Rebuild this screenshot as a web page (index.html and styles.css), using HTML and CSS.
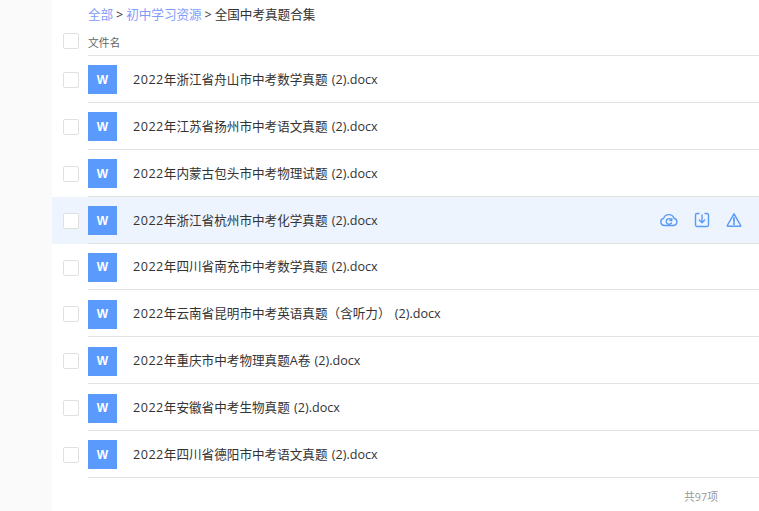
FILE: index.html
```html
<!DOCTYPE html>
<html lang="zh-CN">
<head>
<meta charset="utf-8">
<title>全国中考真题合集</title>
<link rel="stylesheet" href="styles.css">
</head>
<body>
<main class="panel">
  <nav class="crumbs"><a>全部</a> &gt; <a>初中学习资源</a> &gt; 全国中考真题合集</nav>
  <div class="head">
    <span class="check"></span>
    <div class="cell head-cell">文件名</div>
  </div>
  <div class="row"><span class="check"></span><div class="cell"><span class="file">W</span><span class="name"><span class="yr">2022</span>年浙江省舟山市中考数学真题 (2).docx</span></div></div>
  <div class="row"><span class="check"></span><div class="cell"><span class="file">W</span><span class="name"><span class="yr">2022</span>年江苏省扬州市中考语文真题 (2).docx</span></div></div>
  <div class="row"><span class="check"></span><div class="cell"><span class="file">W</span><span class="name"><span class="yr">2022</span>年内蒙古包头市中考物理试题 (2).docx</span></div></div>
  <div class="row hover"><span class="check"></span><div class="cell"><span class="file">W</span><span class="name"><span class="yr">2022</span>年浙江省杭州市中考化学真题 (2).docx</span>
    <div class="actions">
      <svg width="18" height="18" viewBox="0 0 18 18" fill="none" stroke="#5b9bf8" stroke-width="1.4" stroke-linejoin="round" stroke-linecap="round"><path d="M5 14.500H4.600A3.600 3.600 0 0 1 3.600 7.400 5.500 5.500 0 0 1 14 7.200a3.700 3.700 0 0 1-.5 7.300H5z"/><path d="M11.600 9.200A2.800 2.800 0 1 0 11.400 12M9.800 9.600h2V7.600"/></svg>
      <svg width="18" height="18" viewBox="0 0 18 18" fill="none" stroke="#5b9bf8" stroke-width="1.4" stroke-linejoin="round" stroke-linecap="round"><path d="M6 2.500H4a1.500 1.500 0 0 0-1.500 1.500v10A1.500 1.500 0 0 0 4 15.500h10a1.500 1.500 0 0 0 1.500-1.500V4A1.500 1.500 0 0 0 14 2.500h-2"/><path d="M9 4v7.500M6.300 9 9 11.700 11.700 9"/></svg>
      <svg width="18" height="18" viewBox="0 0 18 18" fill="none" stroke="#5b9bf8" stroke-width="1.500" stroke-linejoin="round" stroke-linecap="round"><path d="M9 2.800 15.700 14.500a.5.5 0 0 1-.4.700H2.700a.5.5 0 0 1-.4-.700z"/><path d="M9 7v3.800" stroke-width="1.800"/><path d="M9 12.500v.7" stroke-width="1.800"/></svg>
    </div></div></div>
  <div class="row"><span class="check"></span><div class="cell"><span class="file">W</span><span class="name"><span class="yr">2022</span>年四川省南充市中考数学真题 (2).docx</span></div></div>
  <div class="row"><span class="check"></span><div class="cell"><span class="file">W</span><span class="name"><span class="yr">2022</span>年云南省昆明市中考英语真题（含听力） (2).docx</span></div></div>
  <div class="row"><span class="check"></span><div class="cell"><span class="file">W</span><span class="name"><span class="yr">2022</span>年重庆市中考物理真题A卷 (2).docx</span></div></div>
  <div class="row"><span class="check"></span><div class="cell"><span class="file">W</span><span class="name"><span class="yr">2022</span>年安徽省中考生物真题 (2).docx</span></div></div>
  <div class="row"><span class="check"></span><div class="cell"><span class="file">W</span><span class="name"><span class="yr">2022</span>年四川省德阳市中考语文真题 (2).docx</span></div></div>
  <div class="total">共97项</div>
</main>
</body>
</html>
```
FILE: styles.css
```css
html, body { margin: 0; height: 100%; }
body {
  background: #fafafa;
  font-family: "Open Sans", "Noto Sans CJK SC", sans-serif;
  color: #333;
  overflow: hidden;
}
.panel {
  margin-left: 52px;
  height: 511px;
  background: #fff;
}
.crumbs {
  padding: 6px 0 0 36px;
  height: 20px;
  font-size: 12.6px;
  line-height: 17px;
  word-spacing: -0.4px;
}
.crumbs a { color: #7f9cfb; }
.head, .row { display: flex; align-items: stretch; }
.head { height: 30px; }
.check {
  flex: none;
  box-sizing: border-box;
  width: 16px;
  height: 16px;
  margin: 7px 9px 0 11px;
  border: 1px solid #e0e0e0;
  border-radius: 2px;
  background: #fff;
}
.cell {
  flex: 1;
  display: flex;
  align-items: center;
  border-bottom: 1px solid #e2e2e2;
}
.head-cell {
  font-size: 10.8px;
  color: #666;
  padding-top: 2px;
}
.row { height: 46.88px; }
.row .check { margin-top: 16px; }
.row .cell { box-sizing: border-box; }
.hover { background: #edf4fe; }
.file {
  flex: none;
  display: flex;
  align-items: center;
  justify-content: center;
  width: 29px;
  height: 29px;
  margin: 2px 16px 0 0;
  background: #5a9afd;
  color: #fff;
  font: bold 12px "Liberation Sans", sans-serif;
}
.name {
  font-size: 12.6px;
  color: #333;
  white-space: nowrap;
  padding-bottom: 1px;
  word-spacing: 1px;
}
.yr { letter-spacing: 0.5px; }
.actions {
  margin-left: auto;
  margin-right: 16px;
  display: flex;
  gap: 14px;
}
.actions svg:first-child { margin-right: 1px; margin-left: -1px; }
.total {
  padding: 10px 41px 0 0;
  text-align: right;
  font-size: 10.8px;
  color: #999;
}
```
